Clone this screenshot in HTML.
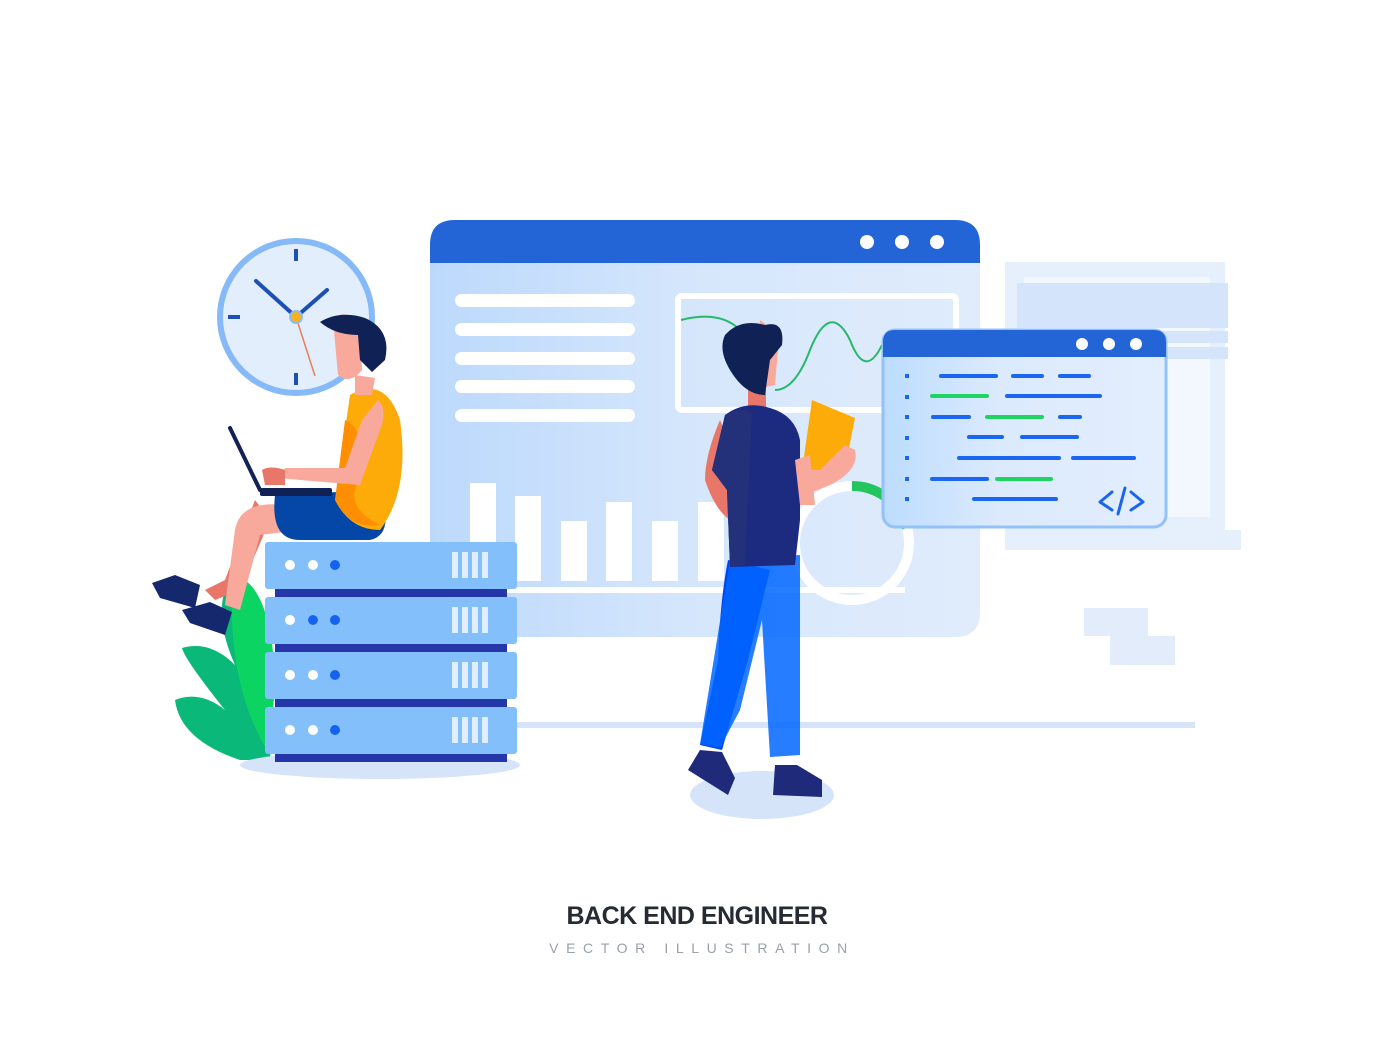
<!DOCTYPE html>
<html><head><meta charset="utf-8"><style>
html,body{margin:0;padding:0;background:#fff;width:1400px;height:1058px;overflow:hidden}
svg{position:absolute;left:0;top:0}
.t1{position:absolute;left:0;width:1394px;top:902px;text-align:center;font:bold 25px "Liberation Sans",sans-serif;color:#262a33;letter-spacing:-0.5px}
.t2{position:absolute;left:0;width:1404px;top:940px;text-align:center;font:14px "Liberation Sans",sans-serif;color:#9aa0a8;letter-spacing:7.6px}
</style></head><body>
<svg width="1400" height="1058" viewBox="0 0 1400 1058">
<defs>
<linearGradient id="g1" x1="0" x2="1"><stop offset="0" stop-color="#bcd9fc"/><stop offset="0.5" stop-color="#d6e7fc"/><stop offset="1" stop-color="#e0ecfc"/></linearGradient>
<linearGradient id="g2" x1="0" x2="1"><stop offset="0" stop-color="#bcdcff"/><stop offset="0.4" stop-color="#dbeafd"/><stop offset="1" stop-color="#e3eefd"/></linearGradient>
</defs>
<rect x="515" y="722" width="680" height="6" fill="#d6e4fa"/>
<rect x="1084" y="608" width="64" height="28" fill="#e2ecfb"/>
<rect x="1110" y="636" width="65" height="29" fill="#e2ecfb"/>
<rect x="1005" y="262" width="220" height="268" fill="#e6f0fd"/>
<rect x="1024" y="277" width="186" height="240" fill="#f3f8ff"/>
<rect x="1017" y="283" width="211" height="45" fill="#d4e4fb"/>
<rect x="1017" y="331" width="211" height="12" fill="#d4e4fb"/>
<rect x="1017" y="347" width="211" height="12" fill="#d4e4fb"/>
<rect x="1005" y="530" width="236" height="20" fill="#e6f0fd"/>
<path d="M430 245 Q430 220 455 220 H955 Q980 220 980 245 V612 Q980 637 955 637 H430 Z" fill="url(#g1)"/>
<path d="M430 245 Q430 220 455 220 H955 Q980 220 980 245 V263 H430 Z" fill="#2364d6"/>
<circle cx="867" cy="242" r="7" fill="#fff"/><circle cx="902" cy="242" r="7" fill="#fff"/><circle cx="937" cy="242" r="7" fill="#fff"/>
<g fill="#fff"><rect x="455" y="294" width="180" height="13" rx="6.5"/><rect x="455" y="323" width="180" height="13" rx="6.5"/><rect x="455" y="352" width="180" height="13" rx="6.5"/><rect x="455" y="380" width="180" height="13" rx="6.5"/><rect x="455" y="409" width="180" height="13" rx="6.5"/></g>
<rect x="678" y="296" width="278" height="114" fill="none" stroke="#fff" stroke-width="6" rx="4"/>
<path d="M681 320 Q720 310 740 330" fill="none" stroke="#28b86a" stroke-width="2"/>
<path d="M775 390 Q795 390 810 350 Q830 300 850 340 Q865 380 882 345" fill="none" stroke="#28b86a" stroke-width="2"/>
<g fill="#fff"><rect x="470" y="483" width="26" height="98"/><rect x="515" y="496" width="26" height="85"/><rect x="561" y="521" width="26" height="60"/><rect x="606" y="502" width="26" height="79"/><rect x="652" y="521" width="26" height="60"/><rect x="698" y="502" width="26" height="79"/></g>
<rect x="455" y="587" width="450" height="6" fill="#fff"/>
<circle cx="852" cy="543" r="57" fill="none" stroke="#fff" stroke-width="10"/>
<path d="M852 486 A57 57 0 0 1 907 528" fill="none" stroke="#22c55e" stroke-width="10"/>
<rect x="883" y="330" width="283" height="197" rx="12" fill="url(#g2)" stroke="#93c2f8" stroke-width="3"/>
<path d="M883 342 Q883 330 895 330 H1154 Q1166 330 1166 342 V357 H883 Z" fill="#2364d6"/>
<circle cx="1082" cy="344" r="6" fill="#fff"/><circle cx="1109" cy="344" r="6" fill="#fff"/><circle cx="1136" cy="344" r="6" fill="#fff"/>
<g stroke-linecap="round" stroke-width="4">
<g stroke="#1a66f0">
<line x1="941" y1="376" x2="996" y2="376"/><line x1="1013" y1="376" x2="1042" y2="376"/><line x1="1060" y1="376" x2="1089" y2="376"/>
<line x1="1007" y1="396" x2="1100" y2="396"/>
<line x1="933" y1="417" x2="969" y2="417"/><line x1="1060" y1="417" x2="1080" y2="417"/>
<line x1="969" y1="437" x2="1002" y2="437"/><line x1="1022" y1="437" x2="1077" y2="437"/>
<line x1="959" y1="458" x2="1059" y2="458"/><line x1="1073" y1="458" x2="1134" y2="458"/>
<line x1="932" y1="479" x2="987" y2="479"/>
<line x1="974" y1="499" x2="1056" y2="499"/>
</g>
<g stroke="#1fd460"><line x1="932" y1="396" x2="987" y2="396"/><line x1="987" y1="417" x2="1042" y2="417"/><line x1="997" y1="479" x2="1051" y2="479"/></g>
</g>
<g fill="#1a66f0"><rect x="905" y="374" width="4" height="4"/><rect x="905" y="395" width="4" height="4"/><rect x="905" y="415" width="4" height="4"/><rect x="905" y="436" width="4" height="4"/><rect x="905" y="456" width="4" height="4"/><rect x="905" y="477" width="4" height="4"/><rect x="905" y="497" width="4" height="4"/></g>
<path d="M1112 492 L1100 502 L1112 510 M1131 492 L1143 502 L1131 510 M1125 488 L1118 514" fill="none" stroke="#1a66f0" stroke-width="3" stroke-linecap="round" stroke-linejoin="round"/>
<circle cx="296" cy="317" r="76" fill="#e3eefc" stroke="#85b9f7" stroke-width="6"/>
<g fill="#1e4fb5"><rect x="294" y="249" width="4" height="12"/><rect x="294" y="373" width="4" height="12"/><rect x="228" y="315" width="12" height="4"/></g>
<line x1="296" y1="317" x2="256" y2="281" stroke="#1e4fb5" stroke-width="4" stroke-linecap="round"/>
<line x1="296" y1="317" x2="327" y2="290" stroke="#1e4fb5" stroke-width="4" stroke-linecap="round"/>
<line x1="296" y1="317" x2="315" y2="376" stroke="#e57f5e" stroke-width="1.5"/>
<circle cx="296" cy="317" r="6" fill="#f7b21b" stroke="#8bbcf5" stroke-width="2"/>
<path d="M240 760 Q180 740 175 700 Q200 690 225 710 Q185 660 182 648 Q210 640 235 665 Q215 620 225 590 Q270 600 275 680 L270 760 Z" fill="#0ab87a"/>
<path d="M270 755 Q235 700 232 620 Q230 585 245 580 Q272 600 275 680 Z" fill="#0bd463"/>
<ellipse cx="380" cy="765" rx="140" ry="14" fill="#d6e4fa"/>
<g id="srv">
<rect x="265" y="542" width="252" height="47" rx="3" fill="#82bffb"/>
<rect x="275" y="589" width="232" height="8" fill="#2536a8"/>
<circle cx="290" cy="565" r="5" fill="#fff"/><circle cx="313" cy="565" r="5" fill="#fff"/><circle cx="335" cy="565" r="5" fill="#1463f0"/>
<g fill="#e0eefd"><rect x="452" y="552" width="6" height="26"/><rect x="462" y="552" width="6" height="26"/><rect x="472" y="552" width="6" height="26"/><rect x="482" y="552" width="6" height="26"/></g>
</g>
<use href="#srv" y="55"/><use href="#srv" y="110"/><use href="#srv" y="165"/>
<circle cx="313" cy="620" r="5" fill="#1463f0"/>
<path d="M255 500 L225 580 L205 590 L215 600 L240 590 L270 520 Z" fill="#e8776a"/>
<path d="M285 505 Q240 500 235 530 L225 605 L240 610 L260 535 L300 530 Z" fill="#f9a99b"/>
<path d="M275 495 Q270 540 300 540 L370 540 Q395 535 380 490 Z" fill="#0447a6"/>
<path d="M152 583 L175 575 L200 585 L195 608 L160 598 Z" fill="#15286d"/>
<path d="M182 610 L210 602 L232 612 L225 635 L190 623 Z" fill="#15286d"/>
<path d="M350 395 Q385 375 400 420 Q410 490 380 530 Q350 530 335 500 Z" fill="#fdab09"/>
<path d="M345 420 Q370 430 355 490 Q350 510 380 525 Q350 530 335 500 Z" fill="#ff8e00"/>
<path d="M355 375 L375 378 L372 395 L355 395 Z" fill="#f9a99b"/>
<path d="M333 320 Q345 305 360 330 L362 370 Q350 385 338 375 Z" fill="#f9a99b"/>
<path d="M320 322 Q340 310 365 318 Q392 330 385 360 L372 372 L360 360 L358 335 Q335 335 320 322 Z" fill="#0f2155"/>
<path d="M378 400 Q388 410 380 430 L360 485 L300 480 L280 478 L285 468 L345 468 L362 420 Z" fill="#f9a99b"/>
<path d="M262 470 Q270 465 285 470 L285 485 L265 485 Z" fill="#e8776a"/>
<line x1="230" y1="428" x2="260" y2="490" stroke="#0f2155" stroke-width="4" stroke-linecap="round"/>
<rect x="260" y="488" width="72" height="8" rx="2" fill="#0f2155"/>
<ellipse cx="762" cy="795" rx="72" ry="24" fill="#d6e4fa"/>
<path d="M728 560 Q720 600 718 660 L700 745 L722 750 L748 660 L770 570 Z" fill="#0043f5"/>
<path d="M730 560 L800 555 L800 755 L770 757 L762 620 L740 710 L720 748 L700 744 Z" fill="#0066ff" opacity="0.85"/>
<path d="M700 750 L688 770 L728 795 L735 778 L722 752 Z" fill="#1f2a7a"/>
<path d="M775 765 L773 795 L822 797 L822 780 L797 765 Z" fill="#1f2a7a"/>
<path d="M720 420 Q705 455 705 480 Q715 510 730 520 L735 505 L722 480 L728 440 Z" fill="#e8776a"/>
<path d="M748 385 L766 385 L766 410 L748 410 Z" fill="#e8776a"/>
<path d="M725 415 Q745 400 770 408 Q795 415 800 440 L800 520 L795 565 L730 567 L727 490 L712 470 Z" fill="#1c2a80"/>
<path d="M725 415 Q745 405 752 415 L745 565 L730 567 L727 490 L712 470 Z" fill="#23307a"/>
<path d="M760 320 Q775 330 778 350 L775 385 L752 390 Z" fill="#f9a99b"/>
<path d="M725 335 Q740 318 765 325 Q785 320 782 345 L770 360 L765 395 Q745 395 730 370 Q718 350 725 335 Z" fill="#0f2155"/>
<path d="M812 400 L855 418 L845 468 L800 485 Z" fill="#fdab09"/>
<path d="M855 450 Q860 470 830 485 L805 495 L800 470 L820 470 L845 445 Z" fill="#f9a99b"/>
<path d="M795 460 L800 505 L815 505 L810 455 Z" fill="#f9a99b"/>
</svg>
<div class="t1">BACK END ENGINEER</div>
<div class="t2">VECTOR ILLUSTRATION</div>
</body></html>
